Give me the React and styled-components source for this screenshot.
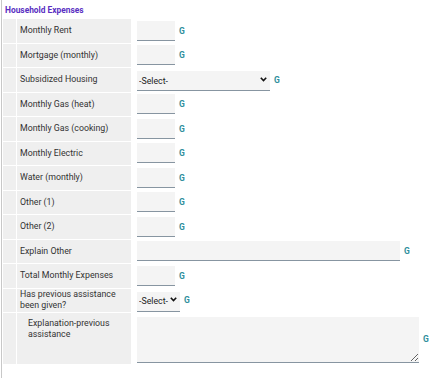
import React from "react";
import styled, { createGlobalStyle } from "styled-components";

const GlobalStyle = createGlobalStyle`
  body {
    margin: 0;
    background: #fff;
    font-family: Roboto, "Liberation Sans", sans-serif;
  }
`;

const Page = styled.div`
  min-height: 378px;
  margin-left: 1px;
  border-left: 1px solid #c8c8c8;
  width: 438px;
`;

const Title = styled.div`
  padding: 5px 0 0 3px;
  height: 13px;
  font-size: 8.4px;
  font-weight: 700;
  color: #5a2fc2;
`;

const Table = styled.table`
  border-collapse: separate;
  border-spacing: 1px;
  margin-left: 0;
`;

const Row = styled.tr`
  height: ${(p) => p.h || 23.5}px;
`;

const Gutter = styled.td`
  width: 13px;
  padding: 0;
  background: #efefef;
`;

const Label = styled.td`
  box-sizing: border-box;
  width: 114px;
  padding: ${(p) => (p.indent ? "5px 0 0 11px" : "0 0 0 3px")};
  vertical-align: ${(p) => (p.indent ? "top" : "middle")};
  background: #efefef;
  font-size: 8.8px;
  line-height: 11px;
  color: #333;
`;

const Field = styled.td`
  padding: 0 0 0 5px;
  vertical-align: middle;
`;

const FieldLine = styled.div`
  display: flex;
  align-items: center;
`;

const TextInput = styled.input`
  box-sizing: border-box;
  width: ${(p) => p.w || 38}px;
  height: 20px;
  margin: 0;
  padding: 0 3px;
  border: none;
  border-bottom: 1px solid #8795a1;
  background: #f4f4f4;
  font-family: inherit;
  font-size: 9px;
  outline: none;
`;

const SelectWrap = styled.div`
  position: relative;
  width: ${(p) => p.w}px;
`;

const Select = styled.select`
  box-sizing: border-box;
  width: 100%;
  height: 20px;
  margin: 0;
  padding: 0 0 0 2px;
  border: none;
  border-bottom: 1px solid #8795a1;
  background: #f4f4f4;
  font-family: inherit;
  font-size: 8.8px;
  color: #222;
  appearance: none;
  outline: none;
`;

const Chevron = styled.svg`
  position: absolute;
  right: 3px;
  top: 8px;
  width: 7px;
  height: 5px;
  pointer-events: none;
`;

const TextArea = styled.textarea`
  box-sizing: border-box;
  width: 282px;
  height: 46px;
  margin: 2px 0 0;
  padding: 2px;
  border: none;
  border-bottom: 1px solid #8795a1;
  background: #f4f4f4;
  font-family: inherit;
  font-size: 9px;
  outline: none;
  display: block;
`;

const G = styled.span`
  margin-left: 4px;
  font-size: 8.5px;
  font-weight: 700;
  color: #2f8f9c;
`;

function Dropdown({ w }) {
  return (
    <SelectWrap w={w}>
      <Select defaultValue="">
        <option value="">-Select-</option>
        <option value="y">Yes</option>
        <option value="n">No</option>
      </Select>
      <Chevron viewBox="0 0 7 5">
        <path d="M0.8 0.8 L3.5 3.6 L6.2 0.8" fill="none" stroke="#111" strokeWidth="1.6" />
      </Chevron>
    </SelectWrap>
  );
}

const rows = [
  { label: "Monthly Rent" },
  { label: "Mortgage (monthly)" },
  { label: "Subsidized Housing", kind: "select", w: 133 },
  { label: "Monthly Gas (heat)" },
  { label: "Monthly Gas (cooking)" },
  { label: "Monthly Electric" },
  { label: "Water (monthly)" },
  { label: "Other (1)" },
  { label: "Other (2)" },
  { label: "Explain Other", w: 263 },
  { label: "Total Monthly Expenses" },
  { label: "Has previous assistance been given?", kind: "select", w: 43 },
];

export default function App() {
  return (
    <>
      <GlobalStyle />
      <Page>
        <Title>Household Expenses</Title>
        <Table>
          <tbody>
            {rows.map((r) => (
              <Row key={r.label}>
                <Gutter />
                <Label>{r.label}</Label>
                <Field>
                  <FieldLine>
                    {r.kind === "select" ? <Dropdown w={r.w} /> : <TextInput w={r.w} />}
                    <G>G</G>
                  </FieldLine>
                </Field>
              </Row>
            ))}
            <Row h={51}>
              <Gutter />
              <Label indent>Explanation-previous assistance</Label>
              <Field>
                <FieldLine>
                  <TextArea />
                  <G>G</G>
                </FieldLine>
              </Field>
            </Row>
          </tbody>
        </Table>
      </Page>
    </>
  );
}
